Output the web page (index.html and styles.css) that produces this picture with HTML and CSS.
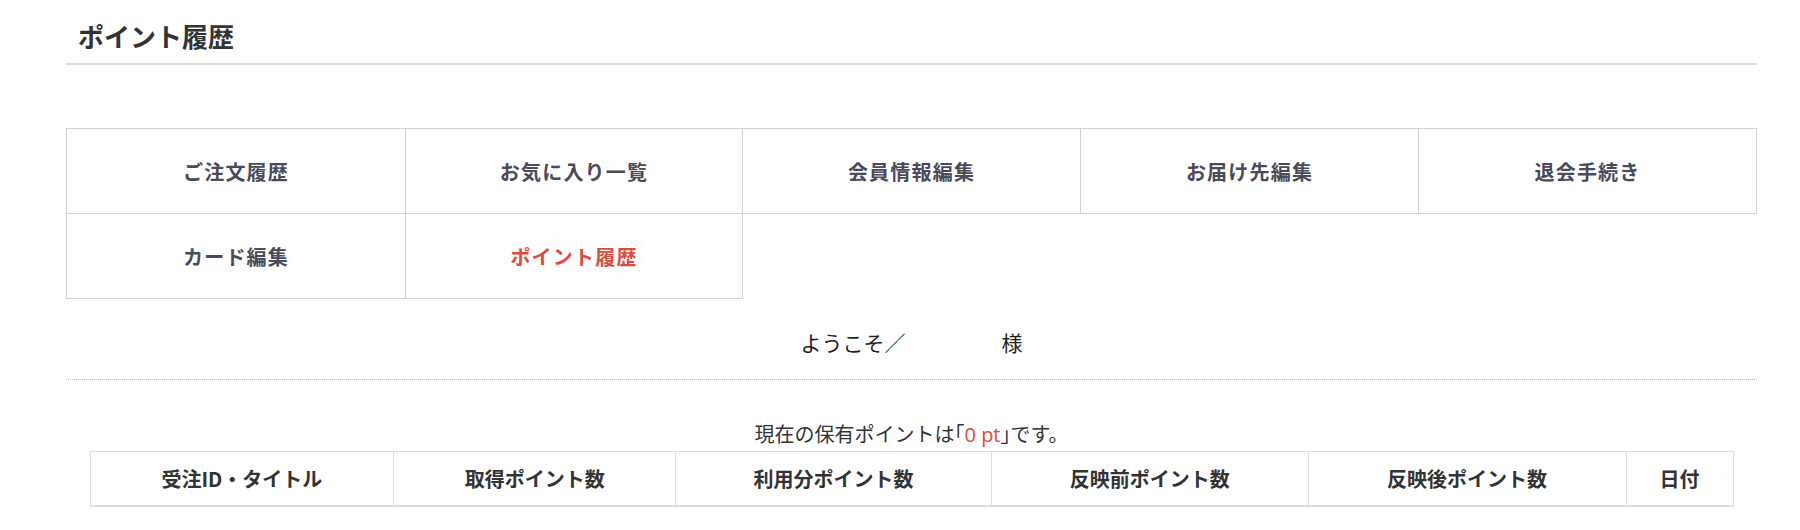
FILE: index.html
```html
<!DOCTYPE html>
<html lang="ja">
<head>
<meta charset="utf-8">
<title>ポイント履歴</title>
<link rel="stylesheet" href="styles.css">
</head>
<body>
<div class="page">
  <h2 class="page-title">ポイント履歴</h2>
  <ul class="mypage-nav">
    <li class="nav-item"><a href="#">ご注文履歴</a></li>
    <li class="nav-item"><a href="#">お気に入り一覧</a></li>
    <li class="nav-item"><a href="#">会員情報編集</a></li>
    <li class="nav-item"><a href="#">お届け先編集</a></li>
    <li class="nav-item"><a href="#">退会手続き</a></li>
    <li class="nav-item"><a href="#">カード編集</a></li>
    <li class="nav-item is-active"><a href="#">ポイント履歴</a></li>
  </ul>
  <p class="welcome">ようこそ／<span class="user-name"></span>様</p>
  <p class="point-now">現在の保有ポイントは<span class="br">「</span><span class="pt">0 pt</span><span class="br">」</span>です。</p>
  <table class="point-table">
    <thead>
      <tr>
        <th class="c1">受注ID・タイトル</th>
        <th class="c2">取得ポイント数</th>
        <th class="c3">利用分ポイント数</th>
        <th class="c4">反映前ポイント数</th>
        <th class="c5">反映後ポイント数</th>
        <th class="c6">日付</th>
      </tr>
    </thead>
  </table>
</div>
</body>
</html>
```

FILE: styles.css
```css
* { box-sizing: border-box; }
body {
  margin: 0;
  background: #fff;
  font-family: "Noto Sans CJK JP", "Noto Sans", sans-serif;
  color: #333;
}
.page {
  margin-left: 66px;
  width: 1691px;
}
.page-title {
  margin: 0;
  padding: 16px 12px 8px;
  font-size: 26px;
  line-height: 39px;
  font-weight: 700;
  color: #333;
  border-bottom: 2px solid #ddd;
}
.mypage-nav {
  list-style: none;
  margin: 63px 0 0;
  padding: 0;
  display: grid;
  grid-template-columns: 340px 337px 338px 338px 338px;
  border-top: 1px solid #d2d2d2;
  width: 1691px;
}
.nav-item {
  height: 85px;
  border-right: 1px solid #d2d2d2;
  border-bottom: 1px solid #d2d2d2;
  display: flex;
  align-items: center;
  justify-content: center;
}
.nav-item:nth-child(5n+1) { border-left: 1px solid #d2d2d2; }
.nav-item a {
  color: #4a4a5a;
  text-decoration: none;
  font-weight: 700;
  font-size: 20px;
  letter-spacing: 1.2px;
}
.nav-item.is-active a { color: #e2493d; }
.welcome {
  margin: 28px 0 0;
  padding-bottom: 22px;
  text-align: center;
  font-size: 21px;
  line-height: 30px;
  color: #222;
  border-bottom: 1px dotted #bbb;
}
.user-name {
  display: inline-block;
  width: 96px;
}
.point-now {
  margin: 39px 0 1px;
  text-align: center;
  font-size: 20px;
  line-height: 30px;
  color: #333;
}
.br { font-feature-settings: "halt"; }
.pt { color: #e2493d; font-family: "Open Sans", "Noto Sans CJK JP", sans-serif; }
.point-table {
  margin: 0 auto;
  width: 1644px;
  border-collapse: collapse;
}
.point-table th {
  border: 1px solid #ddd;
  border-bottom-width: 2px;
  padding: 12px 8px 11px;
  font-size: 20px;
  line-height: 30px;
  font-weight: 700;
  color: #333;
  text-align: center;
}
.c1 { width: 304px; }
.c2 { width: 282px; }
.c3 { width: 316px; }
.c4 { width: 317px; }
.c5 { width: 318px; }
.c6 { width: 107px; }
```
